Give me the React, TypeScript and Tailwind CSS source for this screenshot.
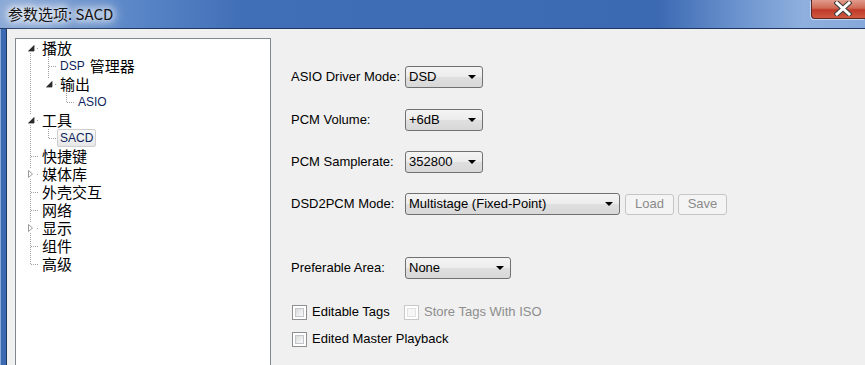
import type { ReactNode } from "react"

type Cell =
  | { kind: "line" }
  | { kind: "blank" }
  | { kind: "tee" }
  | { kind: "elbow" }
  | { kind: "open"; up: boolean; down: boolean }
  | { kind: "closed"; up: boolean; down: boolean }

const dotColor = "#a0a0a0"

function TreeCell({ cell }: { cell: Cell }) {
  const k = cell.kind
  return (
    <svg width={18} height={18} viewBox="0 0 18 18" shapeRendering="crispEdges" className="shrink-0">
      {(k === "line" || k === "tee") && (
        <line x1={9.5} y1={0} x2={9.5} y2={18} stroke={dotColor} strokeDasharray="1 1" />
      )}
      {k === "elbow" && <line x1={9.5} y1={0} x2={9.5} y2={10} stroke={dotColor} strokeDasharray="1 1" />}
      {(k === "tee" || k === "elbow") && (
        <line x1={10} y1={9.5} x2={18} y2={9.5} stroke={dotColor} strokeDasharray="1 1" />
      )}
      {(k === "open" || k === "closed") && (
        <>
          {cell.up && <line x1={9.5} y1={0} x2={9.5} y2={4} stroke={dotColor} strokeDasharray="1 1" />}
          {cell.down && <line x1={9.5} y1={14} x2={9.5} y2={18} stroke={dotColor} strokeDasharray="1 1" />}
          <rect x={16} y={9} width={1} height={1} fill={dotColor} />
        </>
      )}
      {k === "open" && <polygon points="13,6 13,12 7,12" fill="#2b2b2b" stroke="#555" strokeWidth={0.5} />}
      {k === "closed" && (
        <polygon points="7.5,5.5 7.5,12.5 11.5,9" fill="#fff" stroke="#9a9a9a" strokeWidth={1} shapeRendering="auto" />
      )}
    </svg>
  )
}

function Zh({ children }: { children: ReactNode }) {
  return (
    <span className="inline-block h-[18px] font-['Noto_Sans_CJK_SC',sans-serif] text-[15px] leading-[18px] text-black">
      {children}
    </span>
  )
}

function En({ children }: { children: ReactNode }) {
  return (
    <span className="inline-block h-[16px] font-['Liberation_Sans',sans-serif] text-[12px] leading-[16px] text-[#0f1f5c]">
      {children}
    </span>
  )
}

function TreeRow({ cells, children, selected }: { cells: Cell[]; children: ReactNode; selected?: boolean }) {
  return (
    <div className="flex h-[18px] items-center">
      {cells.map((c, i) => (
        <TreeCell key={i} cell={c} />
      ))}
      {selected ? (
        <span className="flex h-[18px] items-center rounded-[2px] border border-[#cfcfcf] bg-gradient-to-b from-[#fbfbfb] to-[#e7e7e7] px-[2px]">
          {children}
        </span>
      ) : (
        <span className="flex h-[18px] items-center whitespace-nowrap px-[3px]">{children}</span>
      )}
    </div>
  )
}

function Arrow() {
  return (
    <svg width={8} height={4} viewBox="0 0 8 4" className="shrink-0">
      <polygon points="0,0 8,0 4,4" fill="#000" />
    </svg>
  )
}

function Combo({ value, className }: { value: string; className: string }) {
  return (
    <div
      className={`flex h-[22px] items-center justify-between rounded-[3px] border border-[#707070] bg-[linear-gradient(#f4f4f4,#ececec_50%,#dfdfdf_52%,#d8d8d8)] pl-[3px] pr-[6px] text-[13px] text-black ${className}`}
    >
      <span>{value}</span>
      <Arrow />
    </div>
  )
}

function DisabledButton({ label }: { label: string }) {
  return (
    <div className="flex h-[21px] w-[49px] items-center justify-center rounded-[3px] border border-[#c5c5c5] bg-[#f4f4f4] text-[13px] text-[#8b8b8b]">
      {label}
    </div>
  )
}

function CheckBox({ disabled }: { disabled?: boolean }) {
  return (
    <div
      className={`h-[15px] w-[15px] shrink-0 border bg-white p-[2px] ${disabled ? "border-[#c8c8c8]" : "border-[#8e8f8f]"}`}
    >
      <div
        className={`h-full w-full border ${
          disabled
            ? "border-[#e2e2e2] bg-[#f6f6f6]"
            : "border-[#c2c5c9] bg-gradient-to-br from-[#dadada] to-[#fbfbfb]"
        }`}
      />
    </div>
  )
}

function FormRow({ label, children, className }: { label: string; children: ReactNode; className?: string }) {
  return (
    <div className={`flex h-[22px] items-center ${className ?? ""}`}>
      <div className="w-[114px] shrink-0 text-[13px] text-black">{label}</div>
      {children}
    </div>
  )
}

function CloseButton() {
  return (
    <div className="flex h-[19px] w-[54px] shrink-0 items-start rounded-bl-[4px] border-b border-l border-[#5b2626] bg-[linear-gradient(#e19c8c,#d06a55_45%,#c0392a_55%,#cf5a40)] pl-[22px] pt-[1px] shadow-[-1px_1px_0_rgba(255,255,255,0.5)]">
      <svg width={18} height={15} viewBox="0 0 18 15">
        <path d="M3,2 L15,13 M15,2 L3,13" stroke="#3d3d3d" strokeWidth={5} strokeLinecap="square" />
        <path d="M3,2 L15,13 M15,2 L3,13" stroke="#fff" strokeWidth={3} strokeLinecap="square" />
      </svg>
    </div>
  )
}

const L: Cell = { kind: "line" }
const B: Cell = { kind: "blank" }
const T: Cell = { kind: "tee" }
const E: Cell = { kind: "elbow" }

export default function App() {
  return (
    <div className="flex h-[365px] w-[865px] flex-col overflow-hidden bg-[#f0f0f0] font-['Liberation_Sans',sans-serif]">
      <div className="flex h-[29px] shrink-0 items-start justify-between border-b border-[#1d3761] bg-[linear-gradient(90deg,#8aa8d6_0%,#5d89c9_14%,#416fb7_28%,#3b69b2_76%,#6f96d0_86%,#8fb0de_93%,#86a8da_100%)]">
        <div className="pl-[8px] pt-[5px] font-['Noto_Sans_CJK_SC',sans-serif] text-[15px] leading-[18px] text-[#141414] [text-shadow:0_0_6px_#fff,0_0_10px_#fff,0_0_14px_#fff,0_0_18px_rgba(255,255,255,0.8)]">
          参数选项: SACD
        </div>
        <CloseButton />
      </div>

      <div className="flex min-h-0 flex-1">
        <div className="w-[7px] shrink-0 border-l border-r border-l-[#8aa8d6] border-r-[#1d3761] bg-[#3c6ab1]" />
        <div className="flex flex-1">
          <div className="shrink-0 pl-[8px] pt-[9px]">
            <div className="h-[400px] w-[256px] border border-[#828790] bg-white pl-[5px]">
              <TreeRow cells={[{ kind: "open", up: false, down: true }]}>
                <Zh>播放</Zh>
              </TreeRow>
              <TreeRow cells={[L, T]}>
                <En>DSP</En>
                <span className="w-[5px]" />
                <Zh>管理器</Zh>
              </TreeRow>
              <TreeRow cells={[L, { kind: "open", up: true, down: false }]}>
                <Zh>输出</Zh>
              </TreeRow>
              <TreeRow cells={[L, B, E]}>
                <En>ASIO</En>
              </TreeRow>
              <TreeRow cells={[{ kind: "open", up: true, down: true }]}>
                <Zh>工具</Zh>
              </TreeRow>
              <TreeRow cells={[L, E]} selected>
                <En>SACD</En>
              </TreeRow>
              <TreeRow cells={[T]}>
                <Zh>快捷键</Zh>
              </TreeRow>
              <TreeRow cells={[{ kind: "closed", up: true, down: true }]}>
                <Zh>媒体库</Zh>
              </TreeRow>
              <TreeRow cells={[T]}>
                <Zh>外壳交互</Zh>
              </TreeRow>
              <TreeRow cells={[T]}>
                <Zh>网络</Zh>
              </TreeRow>
              <TreeRow cells={[{ kind: "closed", up: true, down: true }]}>
                <Zh>显示</Zh>
              </TreeRow>
              <TreeRow cells={[T]}>
                <Zh>组件</Zh>
              </TreeRow>
              <TreeRow cells={[E]}>
                <Zh>高级</Zh>
              </TreeRow>
            </div>
          </div>

          <div className="flex flex-col pl-[20px] pt-[37px]">
            <FormRow label="ASIO Driver Mode:">
              <Combo value="DSD" className="w-[78px]" />
            </FormRow>
            <FormRow label="PCM Volume:" className="mt-[21px]">
              <Combo value="+6dB" className="w-[78px]" />
            </FormRow>
            <FormRow label="PCM Samplerate:" className="mt-[20px]">
              <Combo value="352800" className="w-[78px]" />
            </FormRow>
            <FormRow label="DSD2PCM Mode:" className="mt-[20px]">
              <Combo value="Multistage (Fixed-Point)" className="w-[215px]" />
              <div className="ml-[5px] flex gap-[4px]">
                <DisabledButton label="Load" />
                <DisabledButton label="Save" />
              </div>
            </FormRow>
            <FormRow label="Preferable Area:" className="mt-[42px]">
              <Combo value="None" className="w-[106px]" />
            </FormRow>

            <div className="mt-[25px] flex h-[16px] items-center text-[13px]">
              <div className="flex w-[113px] items-center gap-[5px] pl-[1px]">
                <CheckBox />
                <span className="text-black">Editable Tags</span>
              </div>
              <div className="flex items-center gap-[5px]">
                <CheckBox disabled />
                <span className="text-[#8d8d8d]">Store Tags With ISO</span>
              </div>
            </div>
            <div className="mt-[11px] flex h-[16px] items-center gap-[5px] pl-[1px] text-[13px]">
              <CheckBox />
              <span className="text-black">Edited Master Playback</span>
            </div>
          </div>
        </div>
      </div>
    </div>
  )
}
